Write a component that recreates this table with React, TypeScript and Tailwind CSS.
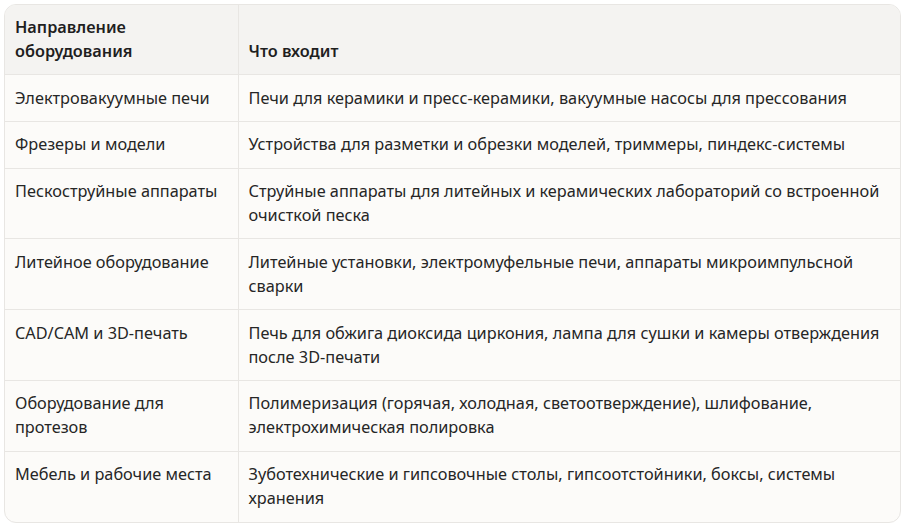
const rows: [string, string][] = [
  ['Электровакуумные печи', 'Печи для керамики и пресс-керамики, вакуумные насосы для прессования'],
  ['Фрезеры и модели', 'Устройства для разметки и обрезки моделей, триммеры, пиндекс-системы'],
  ['Пескоструйные аппараты', 'Струйные аппараты для литейных и керамических лабораторий со встроенной очисткой песка'],
  ['Литейное оборудование', 'Литейные установки, электромуфельные печи, аппараты микроимпульсной сварки'],
  ['CAD/CAM и 3D-печать', 'Печь для обжига диоксида циркония, лампа для сушки и камеры отверждения после 3D-печати'],
  ['Оборудование для протезов', 'Полимеризация (горячая, холодная, светоотверждение), шлифование, электрохимическая полировка'],
  ['Мебель и рабочие места', 'Зуботехнические и гипсовочные столы, гипсоотстойники, боксы, системы хранения'],
];

export default function App() {
  return (
    <div className="bg-white p-1 font-['Noto_Sans',sans-serif] text-[16.3px] leading-6">
      <div className="overflow-hidden rounded-xl border border-[#e8e6e3] bg-[#fcfbf9]">
        <table className="w-full border-collapse">
          <thead>
            <tr className="bg-[#f4f3f1] text-left align-bottom font-semibold text-[#1f1f1f]">
              <th className="w-[233px] border-r border-[#e8e6e3] px-[10px] pt-[10px] pb-[11px] font-semibold">
                Направление
                <br />
                оборудования
              </th>
              <th className="px-[10px] pt-[10px] pb-[11px] font-semibold">Что входит</th>
            </tr>
          </thead>
          <tbody className="text-[#262626]">
            {rows.map(([a, b]) => (
              <tr key={a} className="border-t border-[#e8e6e3] align-top">
                <td className="border-r border-[#e8e6e3] px-[10px] pt-[10.5px] pb-[11.3px]">{a}</td>
                <td className="px-[10px] pt-[10.5px] pb-[11.3px]">{b}</td>
              </tr>
            ))}
          </tbody>
        </table>
      </div>
    </div>
  );
}
